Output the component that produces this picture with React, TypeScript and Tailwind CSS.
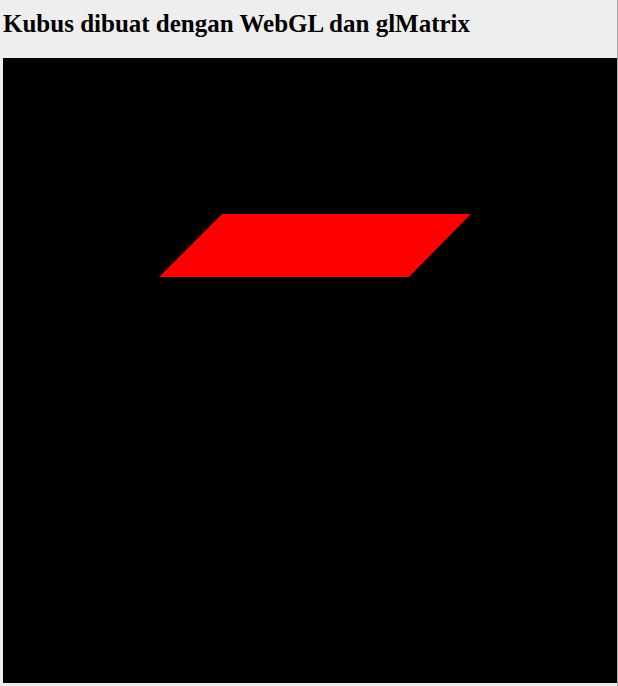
export default function App() {
  return (
    <div className="relative min-h-[686px] bg-[#eeeeee] pt-[7px] pl-[3px]">
      <h2 className="font-['Liberation_Serif',serif] text-[25px] font-bold leading-[34px] text-black">
        Kubus dibuat dengan WebGL dan glMatrix
      </h2>
      <div className="mt-[17px] h-[625px] w-[614px] bg-black">
        <svg width="614" height="625" viewBox="0 0 614 625">
          <polygon points="219,156 468,156 406,219 156,219" fill="#ff0000" />
        </svg>
      </div>
      <div className="absolute right-0 top-0 h-full w-px bg-[#a9a9a9]" />
    </div>
  );
}
